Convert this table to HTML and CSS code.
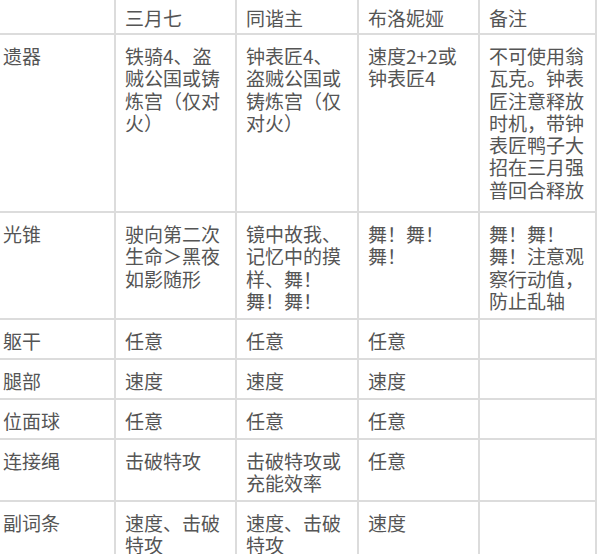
FILE: index.html
```html
<!DOCTYPE html>
<html lang="zh-CN">
<head>
<meta charset="utf-8">
<title>配装表</title>
<link rel="stylesheet" href="styles.css">
</head>
<body>
<div class="sheet">
  <div class="cell head first"></div>
  <div class="cell head">三月七</div>
  <div class="cell head">同谐主</div>
  <div class="cell head">布洛妮娅</div>
  <div class="cell head">备注</div>

  <div class="cell first">遗器</div>
  <div class="cell">铁骑4、盗<br>贼公国或铸<br>炼宫（仅对<br>火）</div>
  <div class="cell">钟表匠4、<br>盗贼公国或<br>铸炼宫（仅<br>对火）</div>
  <div class="cell">速度2+2或<br>钟表匠4</div>
  <div class="cell">不可使用翁<br>瓦克。钟表<br>匠注意释放<br>时机，带钟<br>表匠鸭子大<br>招在三月强<br>普回合释放</div>

  <div class="cell first">光锥</div>
  <div class="cell">驶向第二次<br>生命＞黑夜<br>如影随形</div>
  <div class="cell">镜中故我、<br>记忆中的摸<br>样、舞！<br>舞！舞！</div>
  <div class="cell">舞！舞！<br>舞！</div>
  <div class="cell">舞！舞！<br>舞！注意观<br>察行动值，<br>防止乱轴</div>

  <div class="cell first">躯干</div>
  <div class="cell">任意</div>
  <div class="cell">任意</div>
  <div class="cell">任意</div>
  <div class="cell"></div>

  <div class="cell first">腿部</div>
  <div class="cell">速度</div>
  <div class="cell">速度</div>
  <div class="cell">速度</div>
  <div class="cell"></div>

  <div class="cell first">位面球</div>
  <div class="cell">任意</div>
  <div class="cell">任意</div>
  <div class="cell">任意</div>
  <div class="cell"></div>

  <div class="cell first">连接绳</div>
  <div class="cell">击破特攻</div>
  <div class="cell">击破特攻或<br>充能效率</div>
  <div class="cell">任意</div>
  <div class="cell"></div>

  <div class="cell first">副词条</div>
  <div class="cell">速度、击破<br>特攻</div>
  <div class="cell">速度、击破<br>特攻</div>
  <div class="cell">速度</div>
  <div class="cell"></div>
</div>
</body>
</html>
```

FILE: styles.css
```css
html, body {
  margin: 0;
  padding: 0;
  background: #ffffff;
}

body {
  width: 600px;
  height: 554px;
  overflow: hidden;
  font-family: "Noto Sans CJK SC", "Noto Sans", sans-serif;
  font-size: 19px;
  line-height: 22.3px;
  color: #555555;
}

.sheet {
  display: grid;
  grid-template-columns: 116px 121px 122px 121px 117px;
  grid-template-rows: 35px 178px 107px 40px 40px 40px 62px 60px;
}

.cell {
  box-sizing: border-box;
  border-right: 2px solid #dcdcdc;
  border-bottom: 2px solid #dcdcdc;
  padding: 10px 6px 0 9px;
  white-space: nowrap;
  overflow: hidden;
}

.cell.first {
  padding-left: 3px;
}

.cell.head {
  padding-top: 7px;
}
```
